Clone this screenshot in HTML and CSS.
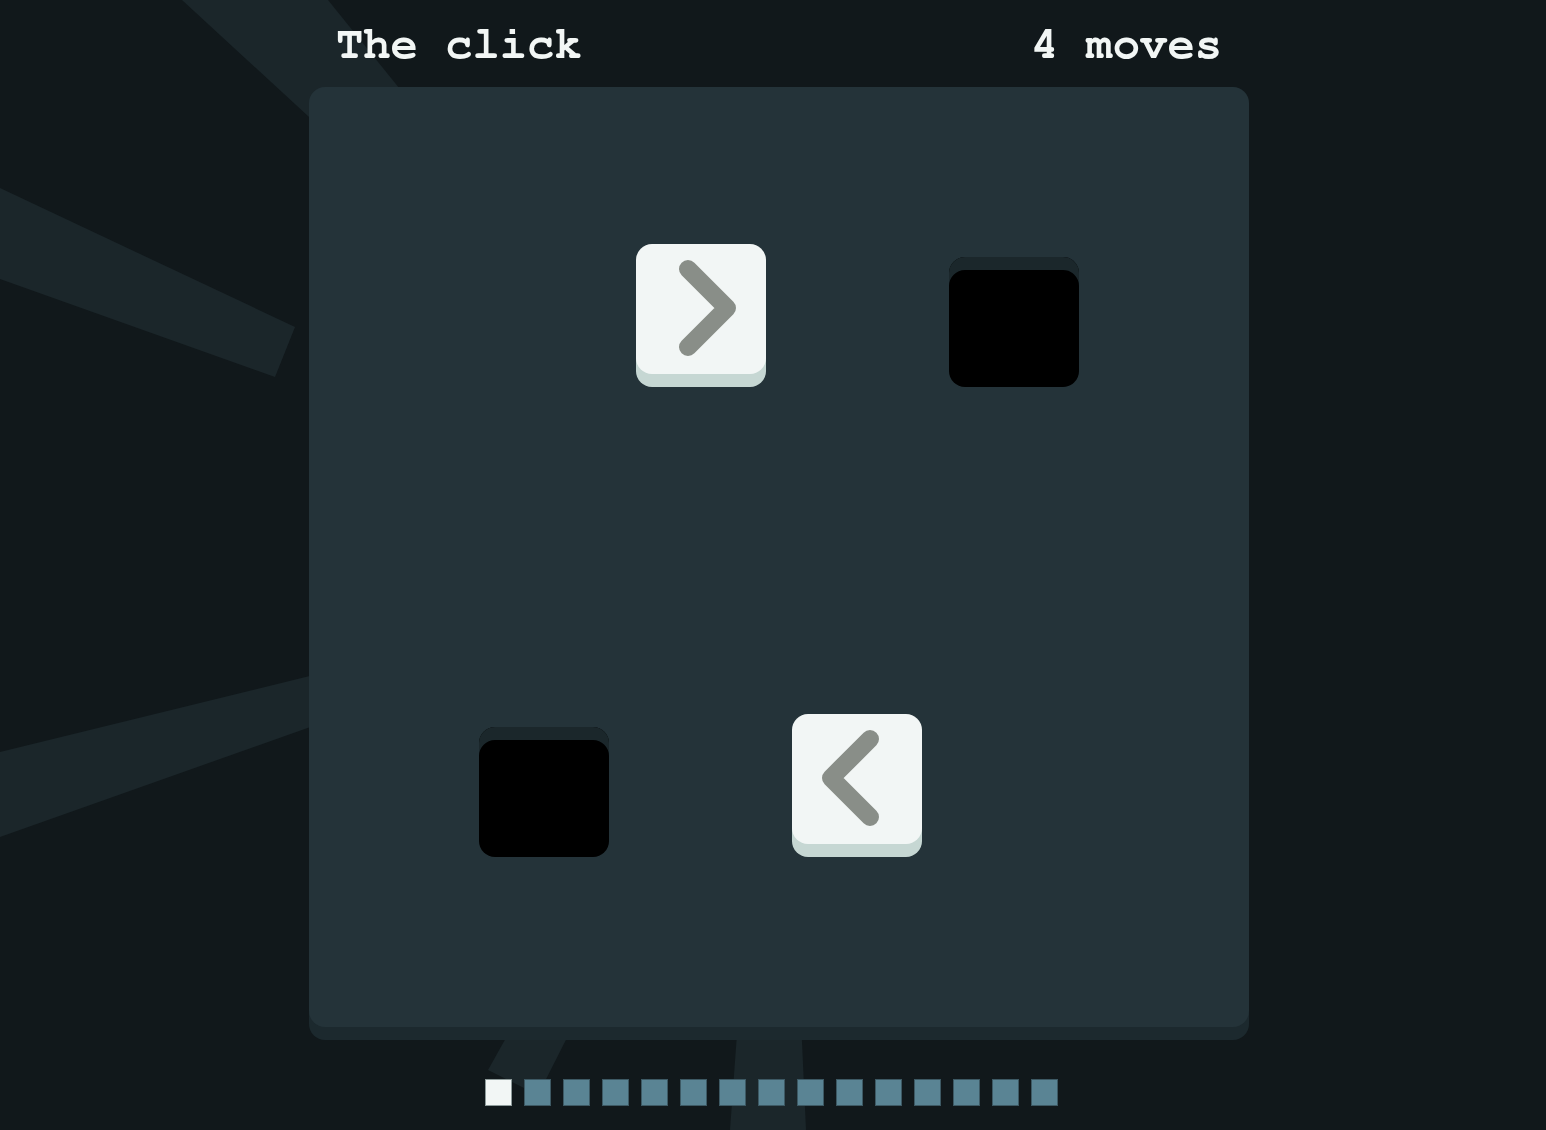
FILE: index.html
```html
<!DOCTYPE html>
<html lang="en">
<head>
<meta charset="utf-8">
<title>The click</title>
<link rel="stylesheet" href="styles.css">
</head>
<body>
<svg class="rays" width="1546" height="1130" viewBox="0 0 1546 1130" aria-hidden="true">
  <polygon points="182,0 328,0 433,130 334,140"/>
  <polygon points="0,188 295,327 275,377 0,279"/>
  <polygon points="0,752 330,671 330,720 0,837"/>
  <polygon points="516,1020 576,1020 538,1095 488,1070"/>
  <polygon points="738,1020 801,1020 806,1130 730,1130"/>
</svg>
<div class="game">
  <header class="top">
    <span class="title">The click</span>
    <span class="moves">4 moves</span>
  </header>
  <div class="board">
    <div class="tile col-3 row-2">
      <svg class="chev" viewBox="0 0 130 130"><polyline points="52,25 91,64 52,103"/></svg>
    </div>
    <div class="hole col-5 row-2"></div>
    <div class="hole col-2 row-5"></div>
    <div class="tile col-4 row-5">
      <svg class="chev" viewBox="0 0 130 130"><polyline points="78,25 39,64 78,103"/></svg>
    </div>
  </div>
</div>
<div class="progress">
  <span class="step current"></span>
  <span class="step"></span>
  <span class="step"></span>
  <span class="step"></span>
  <span class="step"></span>
  <span class="step"></span>
  <span class="step"></span>
  <span class="step"></span>
  <span class="step"></span>
  <span class="step"></span>
  <span class="step"></span>
  <span class="step"></span>
  <span class="step"></span>
  <span class="step"></span>
  <span class="step"></span>
</div>
</body>
</html>
```
FILE: styles.css
```css
html, body {
  margin: 0;
  padding: 0;
}
body {
  background: #11181b;
  width: 1546px;
  height: 1130px;
  overflow: hidden;
  font-family: "Nimbus Mono PS", "Nimbus Mono L", "FreeMono", "Courier 10 Pitch", "Liberation Mono", monospace;
}
.rays {
  position: fixed;
  left: 0;
  top: 0;
  z-index: 0;
}
.rays polygon {
  fill: #1b262a;
}
.game {
  position: relative;
  z-index: 1;
  width: 940px;
  margin-left: 309px;
}
.top {
  height: 87px;
  box-sizing: border-box;
  padding: 22px 27px 0 27px;
  display: flex;
  justify-content: space-between;
  align-items: flex-start;
  color: #f2f6f5;
  font-size: 45.5px;
  line-height: 46px;
  font-weight: bold;
}
.board {
  width: 940px;
  height: 940px;
  background: #243339;
  border-radius: 16px;
  box-shadow: 0 13px 0 #1c292e;
  display: grid;
  grid-template-columns: repeat(6, 1fr);
  grid-template-rows: repeat(6, 1fr);
}
.col-2 { grid-column: 2; }
.col-3 { grid-column: 3; }
.col-4 { grid-column: 4; }
.col-5 { grid-column: 5; }
.row-2 { grid-row: 2; }
.row-5 { grid-row: 5; }
.tile, .hole {
  width: 130px;
  height: 130px;
  border-radius: 16px;
  justify-self: center;
  align-self: start;
}
.tile {
  background: #f2f6f5;
  box-shadow: 0 13px 0 #c6d7d3;
}
.hole {
  margin-top: 13px;
  background: #000;
  box-shadow: inset 0 13px 0 #1b272b;
}
.chev {
  display: block;
  width: 130px;
  height: 130px;
}
.chev polyline {
  fill: none;
  stroke: #898e88;
  stroke-width: 18;
  stroke-linecap: round;
  stroke-linejoin: round;
}
.progress {
  position: relative;
  z-index: 1;
  display: flex;
  justify-content: center;
  gap: 12px;
  margin-top: 52px;
  padding-right: 3px;
}
.step {
  width: 25px;
  height: 25px;
  background: #5a8494;
  border: 1px solid #3d5964;
}
.step.current {
  background: #f2f6f5;
  border-color: #8e9b9b;
}
```
